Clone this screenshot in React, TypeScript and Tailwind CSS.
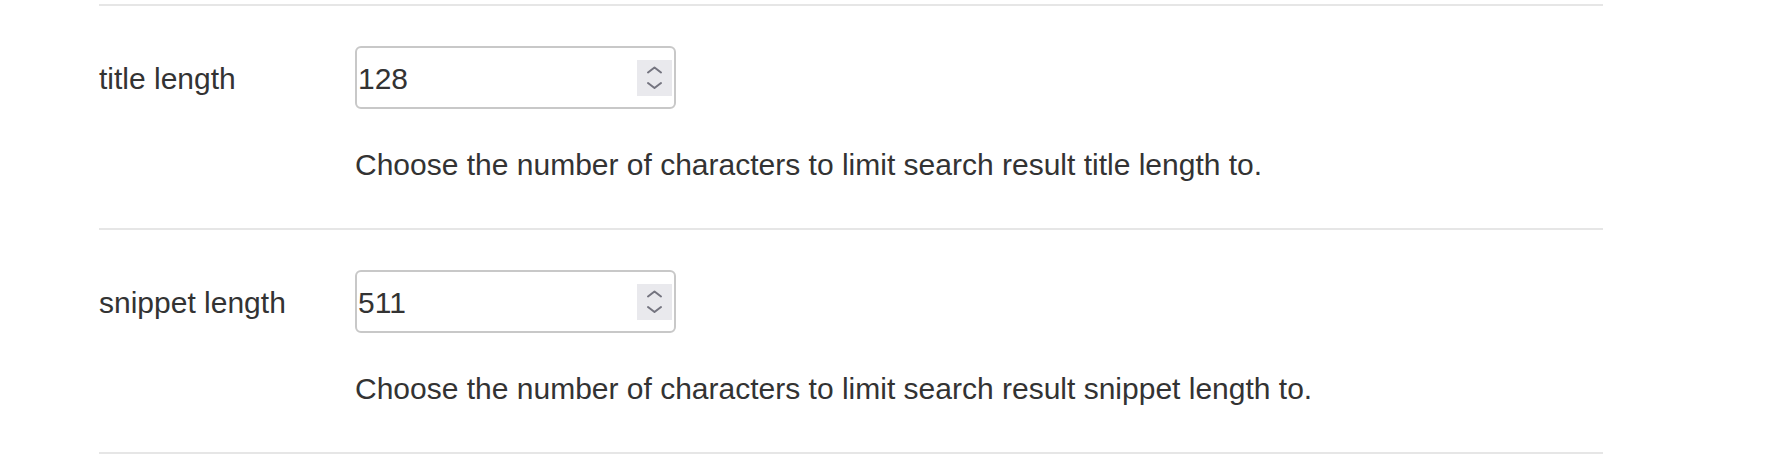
const settings = [
  {
    label: "title length",
    value: "128",
    help: "Choose the number of characters to limit search result title length to.",
  },
  {
    label: "snippet length",
    value: "511",
    help: "Choose the number of characters to limit search result snippet length to.",
  },
];

function Spinner() {
  return (
    <div className="mr-[2px] h-[36px] w-[35px] shrink-0 bg-[#e9e9ed]">
      <svg width="35" height="36" viewBox="0 0 35 36" fill="none">
        <path d="M11 12.5 L17.5 7.5 L24 12.5" stroke="#74747f" strokeWidth="2" strokeLinecap="round" strokeLinejoin="round" />
        <path d="M11 23 L17.5 28 L24 23" stroke="#74747f" strokeWidth="2" strokeLinecap="round" strokeLinejoin="round" />
      </svg>
    </div>
  );
}

function SettingRow({ label, value, help }: { label: string; value: string; help: string }) {
  return (
    <div className="grid grid-cols-[256px_1fr] border-t-2 border-[#e6e6e6] pt-[40px] pb-[41px]">
      <div className="flex h-[63px] items-center pt-[1px] leading-[45px]">{label}</div>
      <div>
        <div className="flex h-[63px] w-[321px] items-center rounded-[6px] border-2 border-[#c8c8c8] bg-white">
          <span className="flex-1 pl-px pt-[1px] leading-[45px]">{value}</span>
          <Spinner />
        </div>
        <p className="mt-[33px] leading-[45px]">{help}</p>
      </div>
    </div>
  );
}

export default function App() {
  return (
    <div className="h-[460px] bg-white pt-1 font-['Liberation_Sans',Arial,sans-serif] text-[30px] text-[#333333]">
      <div className="ml-[99px] w-[1504px] border-b-2 border-[#e6e6e6]">
        {settings.map((s) => (
          <SettingRow key={s.label} {...s} />
        ))}
      </div>
    </div>
  );
}
